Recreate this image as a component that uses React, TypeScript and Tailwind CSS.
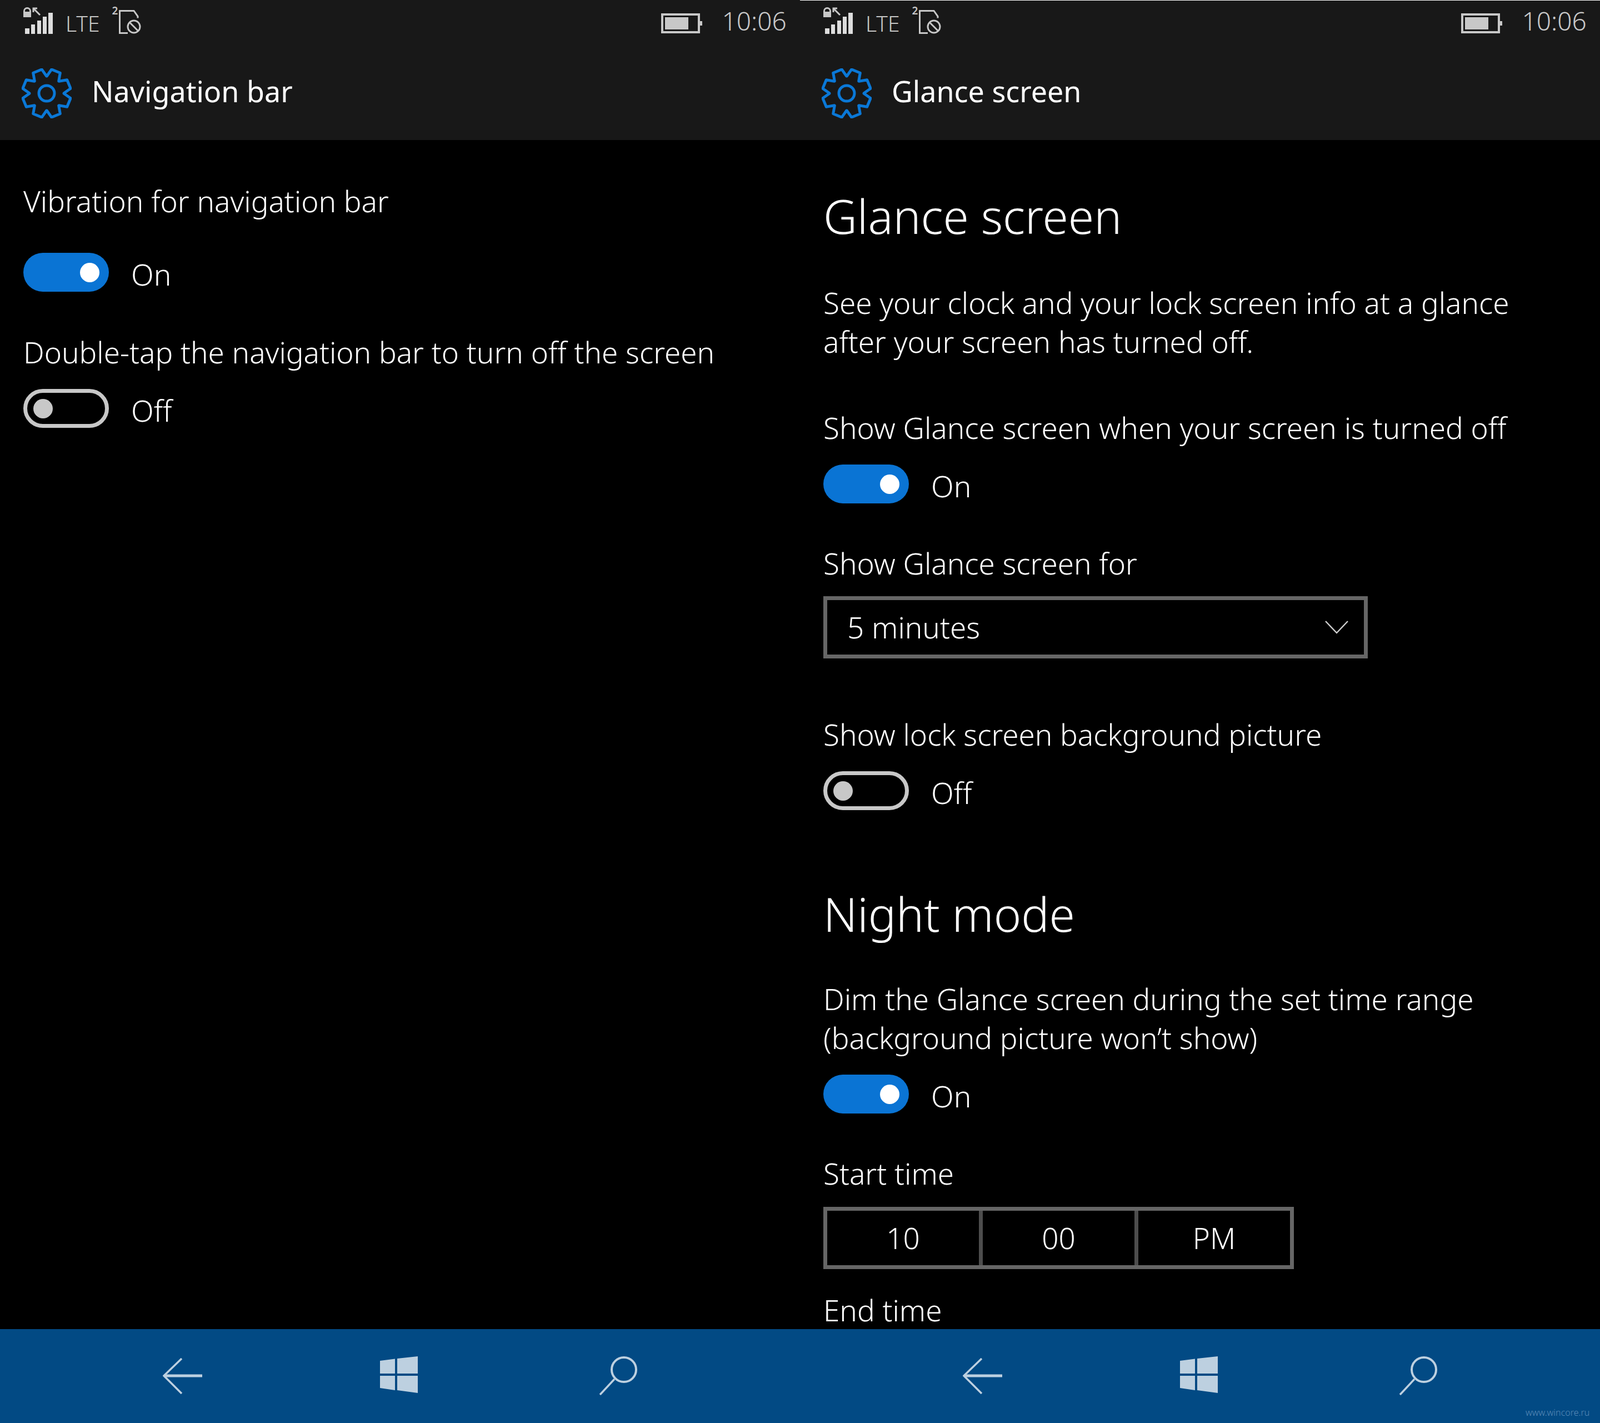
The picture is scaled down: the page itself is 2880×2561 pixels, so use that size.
const gearPath = (() => {
  const pts: string[] = [];
  for (let i = 0; i < 8; i++) {
    const a = 22.5 + i * 45;
    [[-22, 31], [-11, 44], [11, 44], [22, 31]].forEach(([da, r]) => {
      const t = ((a + da) * Math.PI) / 180;
      pts.push(`${(45 + r * Math.cos(t)).toFixed(1)} ${(45 + r * Math.sin(t)).toFixed(1)}`);
    });
  }
  return `M${pts.join("L")}Z`;
})();

function StatusBar() {
  return (
    <div className="flex h-[84px] shrink-0 items-start pl-[42px] pt-[13px] text-[#c8c8c8]">
      <svg width="54" height="48" viewBox="0 0 54 48" className="shrink-0">
        <path d="M0 18V7a7 7 0 0 1 14 0v11ZM3 7v1h8V7a4 4 0 0 0-8 0Z" fill="#c8c8c8" fillRule="evenodd" />
        <path d="M30 14 19 3M18 9V2h7" fill="none" stroke="#c8c8c8" strokeWidth="3" />
        <rect x="3" y="38" width="8" height="10" fill="#ddd" />
        <rect x="14" y="31" width="7" height="17" fill="#ddd" />
        <rect x="25" y="24" width="7" height="24" fill="#ddd" />
        <rect x="35" y="17" width="7" height="31" fill="#ddd" />
        <rect x="45" y="10" width="8" height="38" fill="#ddd" />
      </svg>
      <span className="ml-[22px] mt-[7px] text-[39px] font-light leading-[44px]">LTE</span>
      <span className="ml-[22px] mt-[-6px] text-[19px] font-semibold leading-[24px]">2</span>
      <svg width="40" height="44" viewBox="0 0 40 44" className="ml-[2px] mt-[5px] shrink-0">
        <path d="M16 41.5H1.5v-40H27l7 10v3" fill="none" stroke="#c8c8c8" strokeWidth="3" />
        <circle cx="27" cy="30" r="11" fill="none" stroke="#c8c8c8" strokeWidth="3" />
        <path d="m19 22 16 16" stroke="#c8c8c8" strokeWidth="3" />
      </svg>
      <svg width="74" height="36" viewBox="0 0 74 36" className="ml-[936px] mt-[11px] shrink-0">
        <rect x="2" y="2" width="66" height="32" fill="none" stroke="#c8c8c8" strokeWidth="4" />
        <rect x="7" y="7" width="42" height="22" fill="#c8c8c8" />
        <rect x="70" y="14" width="4" height="8" fill="#c8c8c8" />
      </svg>
      <span className="ml-[35px] mt-[-3px] text-[46px] font-light leading-[54px]">10:06</span>
    </div>
  );
}

function Header({ title }: { title: string }) {
  return (
    <div className="h-[252px] shrink-0 bg-[#181818]">
      <StatusBar />
      <div className="flex h-[168px] items-start pl-[39px] pt-[39px]">
        <svg width="90" height="90" viewBox="0 0 90 90" className="shrink-0">
          <path d={gearPath} fill="none" stroke="#0a78d7" strokeWidth="5" strokeLinejoin="round" />
          <circle cx="45" cy="45" r="14" fill="none" stroke="#0a78d7" strokeWidth="5" />
        </svg>
        <span className="ml-[36px] mt-[6px] text-[52px] leading-[70px] text-white">{title}</span>
      </div>
    </div>
  );
}

function Toggle({ on }: { on: boolean }) {
  return (
    <div className="flex h-[70px] items-center">
      {on ? (
        <div className="flex h-[70px] w-[154px] items-center justify-end rounded-full bg-[#0a74d4] pr-[17px]">
          <div className="size-[35px] rounded-full bg-white" />
        </div>
      ) : (
        <div className="flex h-[70px] w-[154px] items-center rounded-full border-[7px] border-[#c8c8c8] pl-[11px]">
          <div className="size-[35px] rounded-full bg-[#c8c8c8]" />
        </div>
      )}
      <span className="ml-[40px] mt-[8px] text-[53px] font-light leading-[70px] text-white">{on ? "On" : "Off"}</span>
    </div>
  );
}

function Label({ className, children }: { className?: string; children: React.ReactNode }) {
  return <p className={`text-[53px] font-light leading-[70px] text-white ${className ?? ""}`}>{children}</p>;
}

function Heading({ className, children }: { className?: string; children: React.ReactNode }) {
  return <h2 className={`text-[84px] font-light leading-[100px] text-white ${className ?? ""}`}>{children}</h2>;
}

function NavBar() {
  return (
    <div className="flex h-[169px] shrink-0 items-start bg-[#024a84] pl-[293px] pt-[49px]">
      <svg width="71" height="70" viewBox="0 0 71 70" className="mt-[3px] shrink-0">
        <path d="M34 1 2 32l32 32" fill="none" stroke="#bdd0e0" strokeWidth="3.5" />
        <path d="M2 32h69" stroke="#bdd0e0" strokeWidth="5" />
      </svg>
      <svg width="68" height="66" viewBox="0 0 68 66" className="ml-[320px] shrink-0">
        <path d="M0 8 27 4.5V31H0ZM31 4 68 0V31H31ZM0 35H27V61L0 57ZM31 35H68V66L31 61Z" fill="#bdd0e0" />
      </svg>
      <svg width="69" height="70" viewBox="0 0 69 70" className="ml-[326px] shrink-0">
        <circle cx="45" cy="24" r="22" fill="none" stroke="#bdd0e0" strokeWidth="4" />
        <path d="M28 41 2 69" stroke="#bdd0e0" strokeWidth="3.5" />
      </svg>
    </div>
  );
}

function NavigationBarPage() {
  return (
    <div className="flex h-[2561px] w-[1440px] flex-col overflow-hidden bg-black">
      <Header title="Navigation bar" />
      <div className="min-h-0 flex-1 overflow-hidden pl-[42px]">
        <Label className="mt-[75px]">Vibration for navigation bar</Label>
        <div className="mt-[58px]">
          <Toggle on />
        </div>
        <Label className="mt-[74px]">Double-tap the navigation bar to turn off the screen</Label>
        <div className="mt-[31px]">
          <Toggle on={false} />
        </div>
      </div>
      <NavBar />
    </div>
  );
}

function GlancePage() {
  return (
    <div className="flex h-[2561px] w-[1440px] flex-col overflow-hidden bg-black">
      <Header title="Glance screen" />
      <div className="min-h-0 flex-1 overflow-hidden pl-[42px]">
        <Heading className="mt-[87px]">Glance screen</Heading>
        <Label className="mt-[71px] w-[1360px]">
          See your clock and your lock screen info at a glance after your screen has turned off.
        </Label>
        <Label className="mt-[85px]">Show Glance screen when your screen is turned off</Label>
        <div className="mt-[31px]">
          <Toggle on />
        </div>
        <Label className="mt-[73px]">Show Glance screen for</Label>
        <div className="mt-[24px] flex h-[112px] w-[980px] items-center justify-between border-[7px] border-[#666] pl-[36px] pr-[28px]">
          <span className="text-[53px] font-light leading-[70px] text-white">5 minutes</span>
          <svg width="42" height="24" viewBox="0 0 42 24" className="shrink-0">
            <path d="m1 1 20 21L41 1" fill="none" stroke="#ccc" strokeWidth="2.5" />
          </svg>
        </div>
        <Label className="mt-[102px]">Show lock screen background picture</Label>
        <div className="mt-[31px]">
          <Toggle on={false} />
        </div>
        <Heading className="mt-[137px]">Night mode</Heading>
        <Label className="mt-[68px] w-[1360px]">
          Dim the Glance screen during the set time range (background picture won’t show)
        </Label>
        <div className="mt-[31px]">
          <Toggle on />
        </div>
        <Label className="mt-[73px]">Start time</Label>
        <div className="mt-[25px] flex h-[112px] w-[847px] border-[7px] border-[#666] text-[53px] font-light text-white">
          <div className="flex w-[273px] items-center justify-center">10</div>
          <div className="flex w-[280px] items-center justify-center border-l-[7px] border-[#4d4d4d]">00</div>
          <div className="flex w-[280px] items-center justify-center border-l-[7px] border-[#4d4d4d]">PM</div>
        </div>
        <Label className="mt-[39px]">End time</Label>
      </div>
      <NavBar />
    </div>
  );
}

export default function App() {
  return (
    <div className="relative flex h-[2561px] w-[2880px] overflow-hidden bg-black font-['Open_Sans','Liberation_Sans',sans-serif]">
      <NavigationBarPage />
      <GlancePage />
      <div className="absolute left-[1440px] right-0 top-0 h-px bg-white" />
      <span className="absolute left-[2746px] top-[2532px] text-[16px] font-light leading-[20px] text-[#5a8ab8]">
        www.wincore.ru
      </span>
    </div>
  );
}
